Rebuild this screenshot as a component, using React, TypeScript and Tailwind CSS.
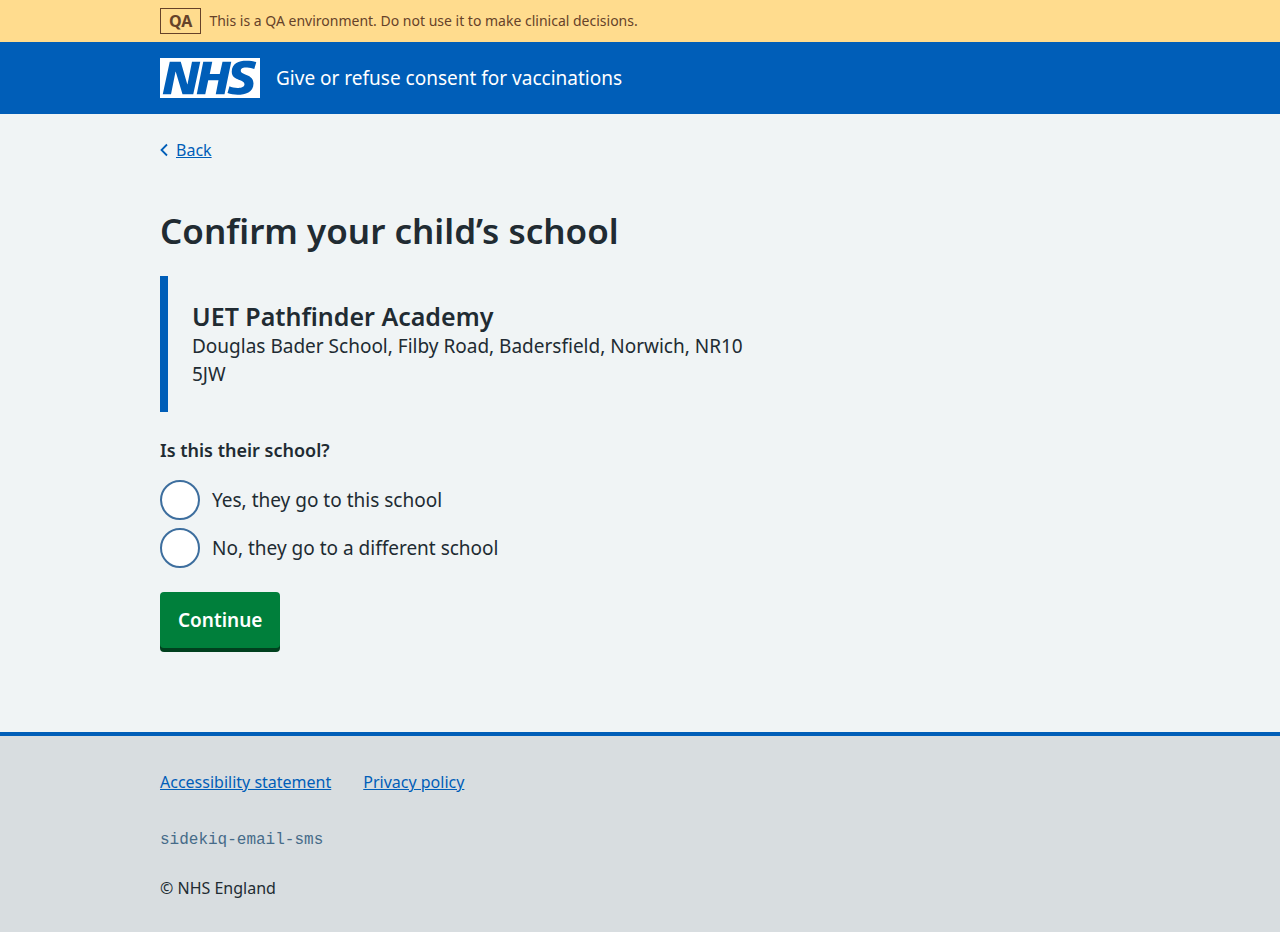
const FOOTER_LINKS = ["Accessibility statement", "Privacy policy"];

const CHOICES = [
  { id: "school-yes", value: "yes", label: "Yes, they go to this school" },
  { id: "school-no", value: "no", label: "No, they go to a different school" },
];

const CONTAINER = "mx-auto w-full max-w-[992px] px-4";

function NhsLogo() {
  return (
    <svg viewBox="0 0 200 80" className="h-10 w-[100px] shrink-0 text-white" role="img" aria-label="NHS">
      <path
        fill="currentColor"
        d="M200 0v80H0V0h200Zm-27.5 5.5c-14.5 0-29 5-29 22 0 10.2 7.7 13.5 14.7 16.3l.7.3c5.4 2 10.1 3.9 10.1 8.4 0 6.5-8.5 7.5-14 7.5s-12.5-1.5-16-3.5L135 70c5.5 2 13.5 3.5 20 3.5 15.5 0 32-4.5 32-22.5 0-19.5-25.5-16.5-25.5-25.5 0-5.5 5.5-6.5 12.5-6.5a35 35 0 0 1 14.5 3l4-13.5c-4.5-2-12-3-20-3Zm-131 2h-22l-14 65H22l9-45h.5l13.5 45h21.5l14-65H64l-9 45h-.5l-13-45Zm63 0h-18l-13 65h17l6-28H117l-5.5 28H129l13.5-65H125L119.5 32h-20l5-24.5Z"
      />
    </svg>
  );
}

function EnvironmentBanner() {
  return (
    <div className="bg-[#ffdc8e] py-2 text-[#664229]">
      <div className={CONTAINER}>
        <div className="flex items-center gap-2">
          <strong className="border border-[#664229] px-2 text-base leading-6 font-bold">QA</strong>
          <span className="text-sm leading-6">
            This is a QA environment. Do not use it to make clinical decisions.
          </span>
        </div>
      </div>
    </div>
  );
}

function Header() {
  return (
    <header className="bg-[#005eb8] py-4 text-white">
      <div className={CONTAINER}>
        <a href="#" className="flex items-center gap-4 text-[19px] leading-7">
          <NhsLogo />
          <span>Give or refuse consent for vaccinations</span>
        </a>
      </div>
    </header>
  );
}

function SchoolForm() {
  return (
    <form className="mt-6" onSubmit={(event) => event.preventDefault()}>
      <fieldset>
        <legend className="text-lg leading-7 font-semibold">Is this their school?</legend>
        <div className="mt-4 flex flex-col gap-2">
          {CHOICES.map((choice) => (
            <div key={choice.id} className="flex items-center gap-3">
              <input
                type="radio"
                id={choice.id}
                name="school"
                value={choice.value}
                className="size-10 shrink-0 appearance-none rounded-full border-2 border-[#3d6e9e] bg-white checked:border-[12px]"
              />
              <label htmlFor={choice.id} className="text-[19px] leading-7">
                {choice.label}
              </label>
            </div>
          ))}
        </div>
      </fieldset>
      <button
        type="submit"
        className="mt-6 mb-1 rounded-[4px] bg-[#007f3b] px-[18px] py-[14px] text-[19px] leading-7 font-semibold text-white shadow-[0_4px_0_#00401e]"
      >
        Continue
      </button>
    </form>
  );
}

function Footer() {
  return (
    <footer className="grow border-t-4 border-[#005eb8] bg-[#d8dde0] pt-8 pb-6">
      <div className={CONTAINER}>
        <ul className="flex flex-wrap gap-8 text-base leading-7">
          {FOOTER_LINKS.map((label) => (
            <li key={label}>
              <a href="#" className="text-[#005eb8] underline">
                {label}
              </a>
            </li>
          ))}
        </ul>
        <p className="mt-[30px] font-['Liberation_Mono',monospace] text-base leading-7 text-[#466b89]">
          sidekiq-email-sms
        </p>
        <p className="mt-5 text-base leading-7">© NHS England</p>
      </div>
    </footer>
  );
}

export default function App() {
  return (
    <div className="flex min-h-screen flex-col bg-[#f0f4f5] font-['Noto_Sans',sans-serif] text-[#212b32]">
      <EnvironmentBanner />
      <Header />
      <div className={CONTAINER}>
        <a href="#" className="mt-6 inline-flex items-center gap-2 text-base leading-6 text-[#005eb8]">
          <svg viewBox="0 0 8 14" className="h-[14px] w-2" fill="none" stroke="currentColor" strokeWidth="1.8" aria-hidden="true">
            <path d="M7 1.5 1.5 7 7 12.5" />
          </svg>
          <span className="underline">Back</span>
        </a>
        <main className="max-w-[629px] pt-[47px] pb-20">
          <h1 className="text-[35px] leading-[42px] font-semibold">Confirm your child’s school</h1>
          <section className="mt-6 border-l-8 border-[#005eb8] p-6">
            <h2 className="text-[25px] leading-8 font-semibold">UET Pathfinder Academy</h2>
            <p className="text-[19px] leading-7">
              Douglas Bader School, Filby Road, Badersfield, Norwich, NR10 5JW
            </p>
          </section>
          <SchoolForm />
        </main>
      </div>
      <Footer />
    </div>
  );
}
